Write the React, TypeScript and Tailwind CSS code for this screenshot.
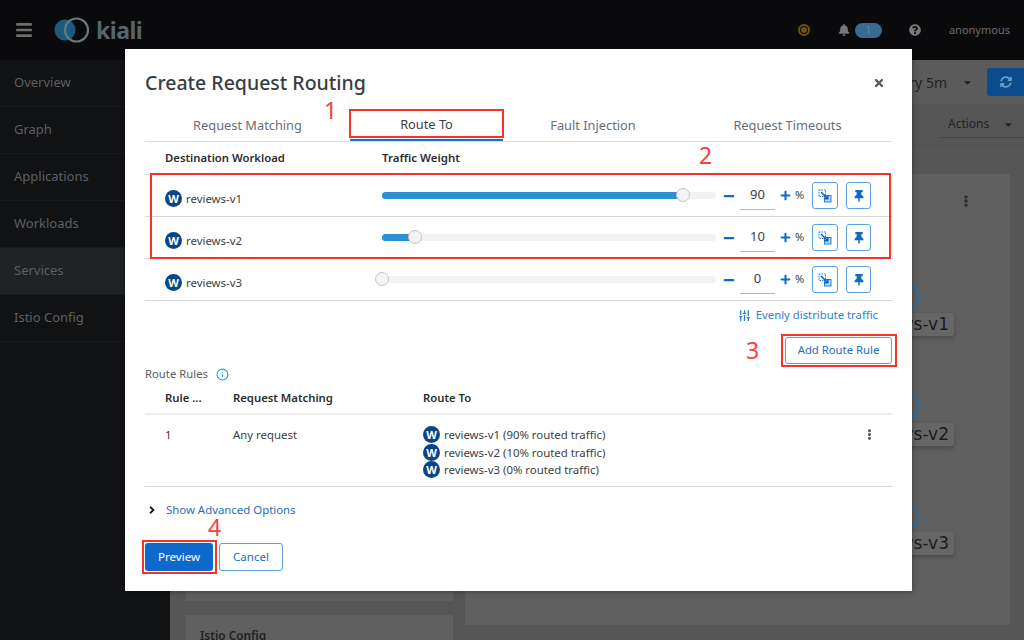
import React from 'react';
import { SlidersVertical, Info } from 'lucide-react';
import { FaBars, FaBell, FaQuestionCircle, FaSyncAlt, FaTimes, FaEllipsisV, FaCaretDown, FaAngleRight, FaThumbtack, FaPlus, FaMinus } from 'react-icons/fa';

const navItems = ['Overview', 'Graph', 'Applications', 'Workloads', 'Services', 'Istio Config'];
const workloads = [
  { name: 'reviews-v1', weight: 90 },
  { name: 'reviews-v2', weight: 10 },
  { name: 'reviews-v3', weight: 0 },
];
const tabs = ['Request Matching', 'Route To', 'Fault Injection', 'Request Timeouts'];

const WIcon = () => (
  <span className="flex h-[17px] w-[17px] shrink-0 items-center justify-center rounded-full bg-[#0b4684] text-[11px] font-bold leading-none text-white">W</span>
);

const MigrateIcon = () => (
  <svg width="14" height="14" viewBox="0 0 14 14" fill="none">
    <rect x="1" y="1" width="6.5" height="6.5" stroke="#2b7fd0" strokeWidth="1" strokeDasharray="1.5 1" />
    <rect x="6.5" y="6.5" width="6.5" height="6.5" fill="#bcd8f2" stroke="#2b7fd0" strokeWidth="1" />
    <path d="M3 3L9.5 9.5M9.8 6.2V9.8H6.2" stroke="#06c" strokeWidth="1.5" />
  </svg>
);

const NodeLabel = ({ text, top }: { text: string; top: string }) => (
  <div className={`absolute right-[56px] ${top} flex h-[23px] w-[90px] items-center justify-end rounded-[3px] bg-[#666] pr-[5px] text-[17px] leading-none text-[#1c1c1c] shadow-[0_2px_4px_rgba(0,0,0,0.25)] [font-family:'DejaVu_Sans',sans-serif]`}>
    {text}
  </div>
);

const NodeArc = ({ top }: { top: string }) => (
  <div className={`absolute right-[90px] ${top} h-[26px] w-[26px] rounded-full border-2 border-[#2f6d9e]`} />
);

const App: React.FC = () => {
  return (
    <div className="relative h-[640px] w-[1024px] overflow-hidden bg-[#565656] text-[13px] [font-family:'Noto_Sans',sans-serif]">
      {/* Masthead */}
      <div className="flex h-[60px] items-center bg-[#0a0a0c]">
        <FaBars className="ml-[15px] text-[#6e6e6e]" size={18} />
        <svg className="ml-[20px]" width="38" height="28" viewBox="0 0 38 28" fill="none">
          <circle cx="12" cy="14" r="10.5" fill="#1c5a7e" />
          <circle cx="23.5" cy="14" r="11.5" stroke="#65777f" strokeWidth="2.2" />
        </svg>
        <span className="ml-[5px] text-[23px] font-bold leading-none tracking-[-0.5px] text-[#56666e]">kiali</span>
        <div className="ml-auto flex items-center text-[#787878]">
          <span className="flex h-[12px] w-[12px] items-center justify-center rounded-full border-2 border-[#6e5212]">
            <span className="h-[6px] w-[6px] rounded-full bg-[#6e5212]" />
          </span>
          <FaBell className="ml-[28px]" size={12} />
          <span className="ml-[5px] flex h-[15px] w-[27px] items-center justify-center rounded-full bg-[#3a6a92] text-[11px] text-[#5f86a8]">1</span>
          <FaQuestionCircle className="ml-[27px]" size={12} />
          <span className="ml-[28px] mr-[14px] text-[11px] text-[#6c6c6c]">anonymous</span>
        </div>
      </div>

      <div className="flex h-[580px]">
        {/* Sidebar */}
        <div className="w-[170px] shrink-0 bg-[#111214]">
          {navItems.map((item) => (
            <div key={item} className={`flex h-[47px] items-center border-b border-[#1a1b1d] pl-[14px] text-[13px] text-[#5d5f62] ${item === 'Services' ? 'bg-[#212225]' : ''}`}>
              {item}
            </div>
          ))}
        </div>

        {/* Dimmed page behind the modal */}
        <div className="flex-1">
          <div className="flex h-[44px] items-center justify-end bg-[#5b5b5b]">
            <span className="text-[14px] text-[#222]">Every 5m</span>
            <FaCaretDown className="ml-[15px] mr-[14px] text-[#222]" size={11} />
            <div className="flex h-[28px] w-[37px] items-center justify-center rounded-l-[3px] bg-[#0a4b8d]">
              <FaSyncAlt className="text-[#6c9ac4]" size={12} />
            </div>
          </div>
          <div className="flex h-[42px] items-center justify-end border-b border-[#505050]">
            <div className="flex h-[27px] w-[83px] items-center border-b border-[#444] pl-[7px] text-[12px] text-[#222]">
              Actions
              <FaCaretDown className="ml-[14px]" size={11} />
            </div>
          </div>
          <div className="flex gap-[12px] pl-[16px] pr-[14px] pt-[28px]">
            <div className="flex w-[267px] shrink-0 flex-col gap-[14px]">
              <div className="h-[427px] bg-[#5f5f5f]" />
              <div className="h-[40px] bg-[#5f5f5f] pl-[14px] pt-[12px] text-[11.8px] font-semibold text-[#222]">Istio Config</div>
            </div>
            <div className="relative h-[451px] flex-1 bg-[#5f5f5f]">
              <FaEllipsisV className="absolute left-[495px] top-[21px] text-[#2e2e2e]" size={12} />
              <NodeArc top="top-[110px]" />
              <NodeLabel text="ws-v1" top="top-[139px]" />
              <NodeArc top="top-[219px]" />
              <NodeLabel text="ws-v2" top="top-[249px]" />
              <NodeArc top="top-[329px]" />
              <NodeLabel text="ws-v3" top="top-[358px]" />
            </div>
          </div>
        </div>
      </div>

      {/* Modal */}
      <div className="absolute left-[125px] top-[49px] h-[542px] w-[787px] bg-white px-[20px] text-[#3c3f42] shadow-[0_0_6px_rgba(0,0,0,0.4)]">
        <div className="flex h-[60px] items-center justify-between pt-[7px]">
          <h1 className="text-[19.5px] font-medium leading-none text-[#3a3d40]">Create Request Routing</h1>
          <FaTimes className="mr-[7px] text-[#55585c]" size={12} />
        </div>

        <div className="grid h-[33px] grid-cols-[205px_153px_180px_209px] border-b border-[#dcdcdc]">
          {tabs.map((tab) => (
            <div key={tab} className={`flex items-center justify-center pt-[2px] text-[12.8px] ${tab === 'Route To' ? 'border-b-2 border-[#1d6fc4] text-[#3c3f42]' : 'text-[#6a6e73]'}`}>
              {tab}
            </div>
          ))}
        </div>

        <div className="flex h-[33px] items-center border-b border-[#e4e4e4] font-semibold text-[#2b2e31]">
          <div className="w-[237px] pl-[20px] text-[11.3px]">Destination Workload</div>
          <div className="text-[11.5px]">Traffic Weight</div>
        </div>

        {workloads.map((w) => (
          <div key={w.name} className="flex h-[42px] items-center border-b border-[#d8d8d8]">
            <div className="flex w-[237px] items-center gap-[4px] pl-[20px] pt-[6px] text-[11.4px]">
              <WIcon />
              {w.name}
            </div>
            <div className="relative h-[7px] w-[334px] rounded-full bg-[#f2f2f2]">
              <div className="h-full rounded-full bg-[#2b8fd0]" style={{ width: `${w.weight}%` }} />
              <div className="absolute top-[-4px] ml-[-7px] h-[14px] w-[14px] rounded-full border border-[#c4c4c4] bg-[#f4f4f4]" style={{ left: `${w.weight}%` }} />
            </div>
            <FaMinus className="ml-[7px] text-[#0e6cc4]" size={12} />
            <div className="ml-[5px] flex h-[28px] w-[35px] items-center justify-center border-b border-[#b8b8b8] text-[13px]">{w.weight}</div>
            <FaPlus className="ml-[5px] text-[#0e6cc4]" size={11} />
            <span className="ml-[4px] w-[9px] text-[11px]">%</span>
            <div className="ml-[8px] flex h-[27px] w-[26px] items-center justify-center rounded-[3px] border border-[#5e9fe0]">
              <MigrateIcon />
            </div>
            <div className="ml-[8px] flex h-[27px] w-[25px] items-center justify-center rounded-[3px] border border-[#5e9fe0]">
              <FaThumbtack className="text-[#0e6cc4]" size={12} />
            </div>
          </div>
        ))}

        <div className="flex h-[28px] items-center justify-end gap-[5px] pr-[14px] text-[11.3px] text-[#2b7fd0]">
          <SlidersVertical size={13} strokeWidth={2.5} />
          Evenly distribute traffic
        </div>

        <div className="flex h-[32px] items-start justify-end pt-[8px]">
          <div className="flex h-[27px] w-[107px] items-center justify-center rounded-[3px] border border-[#5e9fe0] text-[11.3px] text-[#1d6fc4]">Add Route Rule</div>
        </div>

        <div className="mt-[3px] flex h-[20px] items-center gap-[8px] text-[11.3px] text-[#5a5d60]">
          Route Rules
          <Info size={13} className="text-[#2b9af3]" />
        </div>

        <div className="flex h-[31px] items-center border-b-2 border-[#ededed] text-[11.3px] font-semibold text-[#2b2e31]">
          <div className="w-[88px] pl-[20px]">Rule ...</div>
          <div className="w-[190px]">Request Matching</div>
          <div>Route To</div>
        </div>

        <div className="flex h-[72px] border-b border-[#d8d8d8] pt-[11px] text-[11.4px]">
          <div className="w-[88px] pl-[20px] leading-[17px]">1</div>
          <div className="w-[190px] leading-[17px]">Any request</div>
          <div className="flex flex-col">
            {workloads.map((w) => (
              <div key={w.name} className="flex h-[17.5px] items-center gap-[4px]">
                <WIcon />
                {w.name} ({w.weight}% routed traffic)
              </div>
            ))}
          </div>
          <FaEllipsisV className="ml-auto mr-[17px] mt-[3px] text-[#55585c]" size={11} />
        </div>

        <div className="flex h-[45px] items-center text-[11.4px] text-[#1d6fc4]">
          <FaAngleRight className="ml-[1px] text-[#151515]" size={12} />
          <span className="ml-[8px]">Show Advanced Options</span>
        </div>

        <div className="mt-[11px] flex gap-[6px] text-[11.6px]">
          <div className="flex h-[28px] w-[68px] items-center justify-center rounded-[3px] bg-[#0f69cc] text-white">Preview</div>
          <div className="flex h-[28px] w-[64px] items-center justify-center rounded-[3px] border border-[#5e9fe0] text-[#1d6fc4]">Cancel</div>
        </div>
      </div>

      {/* Red annotations on top of the screenshot */}
      <div className="absolute left-[349px] top-[109px] h-[29px] w-[155px] border-2 border-[#f5332a]" />
      <div className="absolute left-[150px] top-[173px] h-[86px] w-[741px] border-2 border-[#f5332a]" />
      <div className="absolute left-[781px] top-[334px] h-[33px] w-[116px] border-2 border-[#f5332a]" />
      <div className="absolute left-[142px] top-[540px] h-[34px] w-[75px] border-2 border-[#f5332a]" />
      <span className="absolute left-[324px] top-[96px] text-[23px] leading-[28px] text-[#f5433a]">1</span>
      <span className="absolute left-[699px] top-[141px] text-[23px] leading-[28px] text-[#f5433a]">2</span>
      <span className="absolute left-[746px] top-[336px] text-[23px] leading-[28px] text-[#f5433a]">3</span>
      <span className="absolute left-[208px] top-[513px] text-[23px] leading-[28px] text-[#f5433a]">4</span>
    </div>
  );
};

export default App;
